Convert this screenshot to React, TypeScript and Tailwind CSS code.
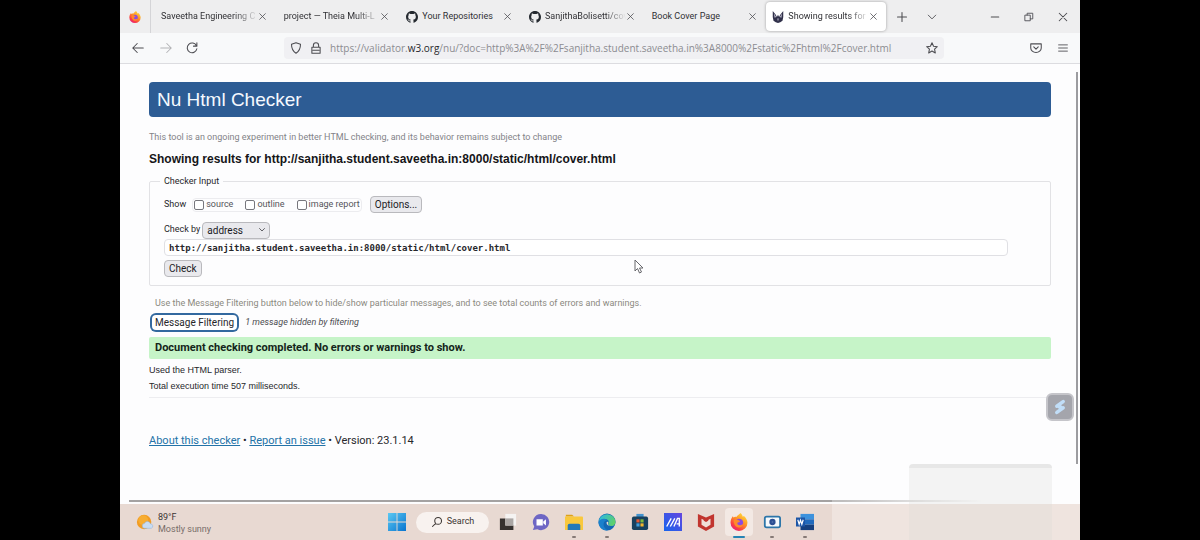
import type { ReactNode } from "react";

const UI = "font-['Roboto','Noto_Sans',sans-serif]";
const SANS = "font-['Liberation_Sans',sans-serif]";

function Firefox({ id, className }: { id: string; className: string }) {
  return (
    <svg viewBox="0 0 24 24" className={className} aria-hidden="true">
      <defs>
        <linearGradient id={id} x1="0.85" y1="0.05" x2="0.2" y2="1">
          <stop offset="0" stopColor="#ffdf3d" />
          <stop offset="0.4" stopColor="#ff9626" />
          <stop offset="0.75" stopColor="#fb4241" />
          <stop offset="1" stopColor="#e31587" />
        </linearGradient>
      </defs>
      <path
        fill={`url(#${id})`}
        d="M14 0c2 2 2.600 3.300 3 5 1-.2 1.500-1 1.500-1C21 6 23.300 9.300 23.300 13A11.300 11 0 0 1 .7 13C.7 9.500 2 6.500 4 4c0 1 .3 1.600.8 2.100C6 5 7 5 8.500 5.300 9.500 3.500 11.500 2.500 14 0Z"
      />
      <circle cx="12" cy="13" r="5.500" fill="#8a4be0" />
      <path fill="#ff8a2b" d="M5 9c2.500-1.500 5-.5 6.500.8 1.300.3 2 .8 1.500 1.700-.7 1-2.500.6-3.200 1.800-.4 1.500 1 3 3 3 2 0 3-1.300 4.800-1-1 3-3.300 4.200-6 4C7 19 4.500 14 5 9Z" />
    </svg>
  );
}

function Github() {
  return (
    <svg viewBox="0 0 16 16" className="mr-1 size-3 shrink-0" fill="#24292f" aria-hidden="true">
      <path d="M8 0C3.580 0 0 3.580 0 8c0 3.540 2.290 6.530 5.470 7.590.4.070.55-.17.55-.38 0-.19-.01-.82-.01-1.490-2.010.37-2.530-.49-2.690-.94-.09-.23-.48-.94-.82-1.130-.28-.15-.68-.52-.01-.53.63-.01 1.080.58 1.230.82.72 1.210 1.870.87 2.330.66.070-.52.280-.87.510-1.070-1.780-.2-3.640-.89-3.640-3.950 0-.87.310-1.590.82-2.150-.08-.2-.36-1.020.08-2.120 0 0 .67-.21 2.200.82.64-.18 1.320-.27 2-.27s1.360.09 2 .27c1.530-1.040 2.200-.82 2.200-.82.44 1.100.16 1.920.08 2.120.51.560.82 1.270.82 2.150 0 3.070-1.870 3.750-3.650 3.950.29.250.54.730.54 1.480 0 1.070-.01 1.930-.01 2.200 0 .210.15.460.55.380A8.010 8.010 0 0 0 16 8c0-4.420-3.580-8-8-8Z" />
    </svg>
  );
}

function Line({ d, className, label }: { d: string; className: string; label?: string }) {
  return (
    <svg viewBox="0 0 16 16" className={className} fill="none" stroke="currentColor" strokeWidth="1.4" strokeLinecap="round" strokeLinejoin="round" aria-label={label}>
      <path d={d} />
    </svg>
  );
}

const CROSS = "M3 3l10 10M13 3L3 13";

function IconButton({ label, d, className = "", size = "size-3" }: { label: string; d: string; className?: string; size?: string }) {
  return (
    <button aria-label={label} className={`flex shrink-0 items-center justify-center text-[#4c4c51] ${className}`}>
      <Line d={d} className={size} />
    </button>
  );
}

function Tab({ title, icon, active, fade }: { title: string; icon?: ReactNode; active?: boolean; fade?: boolean }) {
  return (
    <div
      className={`flex min-w-0 flex-1 items-center ${
        active ? "my-0.5 ml-0.5 rounded-sm bg-white pr-2 pl-1.5 shadow-[0_0_3px_rgba(0,0,0,0.35)]" : "pr-[7px] pl-2.5"
      }`}
    >
      {icon}
      <span
        className={`min-w-0 flex-1 whitespace-nowrap ${
          fade ? "[mask-image:linear-gradient(to_right,black_75%,transparent)]" : ""
        }`}
      >
        {title}
      </span>
      <IconButton label="Close tab" d={CROSS} size="size-[9px]" />
    </div>
  );
}

function Wolf() {
  return (
    <svg viewBox="0 0 16 16" className="mr-1 size-3 shrink-0" aria-hidden="true">
      <path fill="#30304a" d="M1 0l4 5 1.500 3 1.500-3 1.500 3L11 5l4-5v8l-1 5-3 2-3 1-3-1-3-2-1-5Z" />
      <path fill="#c3c1d2" d="M2.500 3l3 5-2 1ZM13.500 3l-3 5 2 1ZM7 10l1 4 1-4Z" />
    </svg>
  );
}

function Check({ label }: { label: string }) {
  return (
    <label className="flex items-center gap-0.5">
      <input type="checkbox" className="size-2.5 appearance-none rounded-xs border border-[#77777d] bg-white" />
      {label}
    </label>
  );
}

const GREY_BUTTON = "rounded-sm border border-[#b9b9bd] bg-[#e9e9ed] text-[#1b1b1f]";

function TaskItem({ label, children, dot, active }: { label: string; children: ReactNode; dot?: boolean; active?: boolean }) {
  return (
    <button aria-label={label} className={`relative flex h-7 w-7 items-center justify-center rounded-sm ${active ? "bg-[#f3e9e4]" : ""}`}>
      {children}
      {dot && <span className="absolute -bottom-0.5 h-0.5 w-1 rounded-full bg-[#867a76]" />}
      {active && <span className="absolute -bottom-0.5 h-0.5 w-3 rounded-full bg-[#2584b5]" />}
    </button>
  );
}

function Taskbar() {
  return (
    <footer className={`relative flex h-9 items-center bg-[#e8d9d2] ${UI} text-[9px] text-[#3b3532]`}>
      <div className="flex flex-1 items-center gap-1 pl-4">
        <svg viewBox="0 0 20 20" className="size-[18px]" aria-hidden="true">
          <circle cx="9" cy="10" r="8" fill="#f29c22" />
          <circle cx="8" cy="8" r="5.500" fill="#f7ad32" />
          <path fill="#c8dcf3" stroke="#8fb1da" strokeWidth=".6" d="M9 17a2.800 2.800 0 0 1 .5-5.500A3.400 3.400 0 0 1 16 12a2.600 2.600 0 0 1 1 5Z" />
        </svg>
        <div className="pt-px leading-3">
          <div>89°F</div>
          <div className="text-[#776c68]">Mostly sunny</div>
        </div>
      </div>
      <nav className="flex items-center gap-[5px] pr-3.5">
        <TaskItem label="Start">
          <svg viewBox="0 0 20 20" className="size-[18px]">
            <defs>
              <linearGradient id="win" x1="0" y1="0" x2="1" y2="1">
                <stop offset="0" stopColor="#5bc9f3" />
                <stop offset="1" stopColor="#0874cf" />
              </linearGradient>
            </defs>
            <path fill="url(#win)" d="M0 0h9.500v9.500H0ZM10.500 0H20v9.500h-9.500ZM0 10.500h9.500V20H0ZM10.500 10.500H20V20h-9.500Z" />
          </svg>
        </TaskItem>
        <button className="flex h-[21px] w-[73px] items-center justify-center gap-1 rounded-full bg-[#f8f2ef]">
          <Line d="M9.500 2a4.500 4.500 0 1 1 0 9 4.500 4.500 0 0 1 0-9ZM6.300 9.700L2 14" className="size-3" />
          Search
        </button>
        <TaskItem label="Task view">
          <svg viewBox="0 0 20 20" className="size-[18px]">
            <path fill="#f5f3f2" d="M7 1h12v13H7Z" />
            <path fill="#35312f" d="M1 6h6v8h9v5H1Z" />
            <path fill="#aaa6a4" d="M7 6h9v8H7Z" />
          </svg>
        </TaskItem>
        <TaskItem label="Chat">
          <svg viewBox="0 0 20 20" className="size-[18px]">
            <path fill="#6e66c4" d="M10 1a9 9 0 1 1-4 17l-5 1 1.500-4A9 9 0 0 1 10 1Z" />
            <path fill="#fff" d="M5 7h7v7H5ZM12.500 9.500L15.500 7v7l-3-2.500Z" />
          </svg>
        </TaskItem>
        <TaskItem label="File Explorer" dot>
          <svg viewBox="0 0 20 20" className="size-[18px]">
            <path fill="#dda219" d="M1 2h7l2 2H1Z" />
            <path fill="#f9c83c" d="M0 4h19a1 1 0 0 1 1 1v14H0Z" />
            <path fill="#2479b8" d="M3 19v-5a2 2 0 0 1 2-2h10a2 2 0 0 1 2 2v5Z" />
          </svg>
        </TaskItem>
        <TaskItem label="Edge" dot>
          <svg viewBox="0 0 20 20" className="size-[18px]">
            <defs>
              <linearGradient id="edge" x1="0" y1="0.1" x2="1" y2="0.5">
                <stop offset="0" stopColor="#2bb8e8" />
                <stop offset="1" stopColor="#5ed06b" />
              </linearGradient>
            </defs>
            <circle cx="10" cy="10" r="9.500" fill="#1267b4" />
            <path fill="url(#edge)" d="M.7 9A9.500 9.500 0 0 1 19.500 10c0 3-2.500 4.500-4.500 4.500-3 0-4-1.500-3.200-3.300C13 8 9 6 6 7 3 7.800 1.500 9 .7 9Z" />
            <path fill="#e7d9d3" d="M11.500 10.500c-1 2 .2 4 3.500 4l3.500-1.200c-3 1.900-9 1.200-9-2.300 0-1.500 1.500-2 2-.5Z" />
            <path fill="#1a80cc" d="M.6 10C3 5.500 8 5.500 10 8c-5 1-5.500 8 1 11.300C5 20 .5 15.500.6 10Z" />
          </svg>
        </TaskItem>
        <TaskItem label="Microsoft Store">
          <svg viewBox="0 0 20 20" className="size-[18px]">
            <path fill="#4293cf" d="M6 1h8v4H6Z" />
            <rect x="1" y="4" width="18" height="15" rx="2" fill="#17405e" />
            <path fill="#e45735" d="M6 7h3.500v3.500H6Z" />
            <path fill="#80b93c" d="M10.500 7H14v3.500h-3.500Z" />
            <path fill="#3e9cdb" d="M6 11.500h3.500V15H6Z" />
            <path fill="#f4b72d" d="M10.500 11.500H14V15h-3.500Z" />
          </svg>
        </TaskItem>
        <TaskItem label="MyASUS">
          <svg viewBox="0 0 20 20" className="size-[18px]">
            <defs>
              <linearGradient id="asus" x1="0" y1="1" x2="1" y2="0">
                <stop offset="0" stopColor="#1664ed" />
                <stop offset="1" stopColor="#6546df" />
              </linearGradient>
            </defs>
            <path fill="url(#asus)" d="M0 0h20v20H0Z" />
            <path fill="none" stroke="#fff" strokeWidth="1.500" d="M3 15L8 6M7 15l5-9M11 15l4-9h2v9M14 12h3" />
          </svg>
        </TaskItem>
        <TaskItem label="McAfee">
          <svg viewBox="0 0 20 20" className="size-[18px]">
            <path fill="#c1352f" d="M1 1l9 4 9-4v14l-9 5-9-5Z" />
            <path fill="#f0ded7" d="M5 6.500L10 9l5-2.500V13l-5 3-5-3Z" />
            <path fill="#c1352f" d="M7.500 5L10 6.500 12.500 5v3.500L10 10 7.500 8.500Z" />
          </svg>
        </TaskItem>
        <TaskItem label="Firefox" active>
          <Firefox id="fxTask" className="size-[18px]" />
        </TaskItem>
        <TaskItem label="Camera" dot>
          <svg viewBox="0 0 20 20" className="size-[18px]">
            <rect x="2" y="4" width="17" height="12" rx="2" fill="#f5f9fc" stroke="#2d76a9" strokeWidth="2" />
            <circle cx="10.500" cy="10" r="3.500" fill="#2b4f93" />
            <circle cx="10.500" cy="10" r="1" fill="#4d6fa8" />
          </svg>
        </TaskItem>
        <TaskItem label="Word" dot>
          <svg viewBox="0 0 20 20" className="size-[18px]">
            <path fill="#3d92dd" d="M5 1h15v6H5Z" />
            <path fill="#216abd" d="M5 7h15v6H5Z" />
            <path fill="#153f7e" d="M5 13h15v6H5Z" />
            <path fill="#1c55a6" d="M0 5h10v10H0Z" />
            <path fill="none" stroke="#fff" strokeWidth="1.300" d="M2 7.500l1.500 5L5 8l1.500 4.500L8 7.500" />
          </svg>
        </TaskItem>
      </nav>
      <div className="flex-1" />
    </footer>
  );
}

export default function App() {
  return (
    <div className="min-h-screen bg-black">
      <div className="relative mx-auto flex min-h-screen w-4/5 flex-col overflow-hidden bg-[#fdfdfe]">
        <header className={`${UI} text-[#303034]`}>
          <div className="flex h-[33px] bg-[#eeeeef] text-[9px]">
            <div className="flex w-[31px] shrink-0 items-center justify-center border-r border-[#d4d4d7]">
              <Firefox id="fxTab" className="size-3" />
            </div>
            <div className="flex min-w-0 flex-1">
              <Tab title="Saveetha Engineering C" fade />
              <Tab title="project — Theia Multi-L" fade />
              <Tab title="Your Repositories" icon={<Github />} />
              <Tab title="SanjithaBolisetti/cov" icon={<Github />} fade />
              <Tab title="Book Cover Page" />
              <Tab title="Showing results for" icon={<Wolf />} active fade />
            </div>
            <IconButton label="New tab" d="M8 2v12M2 8h12" className="w-8" />
            <IconButton label="List all tabs" d="M2 5l6 6 6-6" className="mr-8 w-7" size="size-2.5" />
            <IconButton label="Minimize" d="M3 8h10" className="w-[34px]" size="size-3" />
            <IconButton label="Restore" d="M2 5h8v9H2ZM5 5V2h9v9h-4" className="w-[34px]" size="size-2.5" />
            <IconButton label="Close window" d={CROSS} className="w-[34px]" />
          </div>
          <div className="flex h-[31px] items-center border-b border-[#dcdce0] bg-[#f8f9fa]">
            <IconButton label="Back" d="M15 8H1M7 2L1 8l6 6" className="ml-2.5 w-4" />
            <IconButton label="Forward" d="M1 8h14M9 2l6 6-6 6" className="ml-3 w-4 opacity-40" />
            <IconButton label="Reload" d="M14 5a6.500 6.500 0 1 0 .5 4M14.500 1v4.500H10" className="ml-2.5 w-4" />
            <div className="mr-[86px] ml-[84px] flex h-[22px] min-w-0 flex-1 items-center rounded-sm bg-[#f0f0f3] px-1.5 text-[#4c4c51]">
              <Line d="M8 1l6 2c0 6-1 9-6 12C3 12 2 9 2 3Z" className="size-3 shrink-0" label="Tracking protection" />
              <Line d="M2.500 7h11v8h-11ZM4.500 7V4.500a3.500 3.500 0 0 1 7 0V7M4 11h8" className="mr-2 ml-2 size-3 shrink-0" label="Secure connection" />
              <div className="min-w-0 flex-1 overflow-hidden font-['Open_Sans','Noto_Sans',sans-serif] text-[10px] whitespace-nowrap text-[#8c8c91]">
                https://validator.<span className="text-[#28282d]">w3.org</span>
                /nu/?doc=http%3A%2F%2Fsanjitha.student.saveetha.in%3A8000%2Fstatic%2Fhtml%2Fcover.html
              </div>
              <IconButton label="Bookmark this page" d="M8 1l2.100 4.600 5 .6-3.700 3.400 1 5L8 12.100l-4.400 2.500 1-5L.9 6.200l5-.6Z" />
            </div>
            <IconButton label="Save to Pocket" d="M1 2.500h14V8A7 6 0 0 1 1 8ZM5 6.500l3 3 3-3" />
            <IconButton label="Menu" d="M1 3h14M1 8h14M1 13h14" className="mr-3 ml-4" size="size-2.5" />
          </div>
        </header>

        <main className={`relative flex-1 px-[29px] pt-[18px] ${SANS} text-[10px] text-[#27272b]`}>
          <h1 className="rounded-sm bg-[#2d5c94] pl-2 text-[19px] leading-[35px] text-[#f5f9ff]">Nu Html Checker</h1>
          <p className={`mt-3 ${UI} text-[9px] leading-4 text-[#838388]`}>
            This tool is an ongoing experiment in better HTML checking, and its behavior remains subject to change
          </p>
          <h2 className="mt-[5px] text-[12px] leading-[18px] font-bold text-[#151518]">
            Showing results for http://sanjitha.student.saveetha.in:8000/static/html/cover.html
          </h2>
          <form onSubmit={(e) => e.preventDefault()}>
            <fieldset className={`mt-1.5 rounded-xs border border-[#e2e2e5] pr-[42px] pb-2 pl-3.5 ${UI} text-[9px]`}>
              <legend className="-ml-1 px-1 leading-[14px]">Checker Input</legend>
              <div className="mt-2 flex h-[17px] items-center">
                <span>Show</span>
                <div className="mr-2 ml-1.5 flex h-3.5 items-center gap-3 rounded-sm border border-[#ececef] px-px text-[#55555a]">
                  <Check label="source" />
                  <Check label="outline" />
                  <Check label="image report" />
                </div>
                <button className={`h-[17px] px-1 text-[10px] leading-[15px] ${GREY_BUTTON}`}>Options...</button>
              </div>
              <div className="mt-2 flex h-[18px] items-center gap-0.5">
                <label htmlFor="check-by">Check by</label>
                <div className="relative flex items-center">
                  <select id="check-by" className={`h-[17px] w-[68px] appearance-none pl-1 text-[10px] leading-[15px] ${GREY_BUTTON}`}>
                    <option>address</option>
                  </select>
                  <Line d="M3 5l5 5 5-5" className="pointer-events-none absolute right-1 size-2" />
                </div>
              </div>
              <input
                aria-label="Address"
                defaultValue="http://sanjitha.student.saveetha.in:8000/static/html/cover.html"
                className="block h-[17px] w-full rounded-sm border border-[#e0e0e4] bg-white px-1 font-['DejaVu_Sans_Mono',monospace] text-[9px] font-bold text-[#27272b]"
              />
              <button className={`mt-1 block h-[17px] px-1 text-[10px] leading-[15px] ${GREY_BUTTON}`}>Check</button>
            </fieldset>
          </form>
          <p className={`mt-2.5 pl-1.5 ${UI} text-[9px] leading-[14px] text-[#8b897f]`}>
            Use the Message Filtering button below to hide/show particular messages, and to see total counts of errors and warnings.
          </p>
          <div className={`mt-[5px] flex items-center gap-2 pl-[3px] ${UI} text-[9px]`}>
            <button className="h-[15px] rounded-sm bg-white px-[3px] text-[10px] leading-[15px] ring-2 ring-[#33699f]">
              Message Filtering
            </button>
            <em className="text-[#4d4d52]">1 message hidden by filtering</em>
          </div>
          <p className={`mt-[7px] rounded-xs bg-[#c6f4c8] pl-1.5 ${UI} text-[11px] leading-[22px] font-bold text-[#14251a]`}>
            Document checking completed. No errors or warnings to show.
          </p>
          <div className="border-b border-[#ededf0] pt-[3px] pb-[3px] text-[9px] leading-4">
            <p>Used the HTML parser.</p>
            <p>Total execution time 507 milliseconds.</p>
          </div>
          <p className="mt-[35px] text-[11px] leading-4 font-['Roboto',sans-serif]">
            <a href="#about" className="text-[#2373a8] underline">About this checker</a> •{" "}
            <a href="#issues" className="text-[#2373a8] underline">Report an issue</a> • Version: 23.1.14
          </p>

          <div className="absolute top-2 right-0.5 bottom-10 w-0.5 bg-[#9c9ca0]" />
          <div className="absolute right-0 bottom-0.5 left-[9px] h-0.5 bg-linear-to-r from-[#a4a2a2] from-75% to-transparent to-90%" />
          <button aria-label="Capture" className="absolute top-[329px] right-1.5 flex size-7 items-center justify-center rounded-md border-2 border-[#c5c5ca] bg-[#a4a5ac]">
            <svg viewBox="0 0 20 20" className="size-[18px]">
              <path fill="none" stroke="#c1def8" strokeWidth="4" strokeLinecap="round" strokeLinejoin="round" d="M13.500 4L6.500 9M13.500 11L6.500 16" />
              <path fill="#c1def8" d="M5 9l5-2 5 4-5 2Z" />
            </svg>
          </button>
          <svg viewBox="0 0 10 15" className="absolute top-[195px] left-[514px] h-[15px] w-2.5" aria-hidden="true">
            <path fill="#fff" stroke="#66666b" d="M1 1v11l2.500-2.500L5.500 14l2-1-2-4H9Z" />
          </svg>
        </main>

        <Taskbar />
        <div className="pointer-events-none absolute right-0 bottom-0 h-[70px] w-[248px] bg-white/30" />
        <div className="pointer-events-none absolute right-7 bottom-0 h-[76px] w-[143px] rounded-t-sm border-t-4 border-black/5 bg-[#d7d7d3]/25" />
      </div>
    </div>
  );
}
